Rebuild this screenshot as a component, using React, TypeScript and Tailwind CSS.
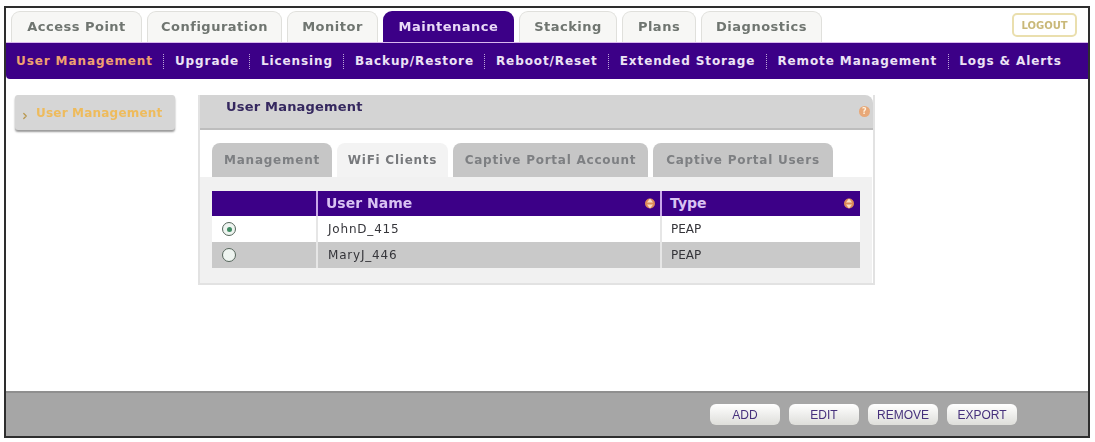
import { ChevronRight } from 'lucide-react'

const topTabs = [
  { label: 'Access Point', width: 'w-[131px]' },
  { label: 'Configuration', width: 'w-[135px]' },
  { label: 'Monitor', width: 'w-[91px]' },
  { label: 'Maintenance', width: 'w-[131px]', active: true },
  { label: 'Stacking', width: 'w-[98px]' },
  { label: 'Plans', width: 'w-[74px]' },
  { label: 'Diagnostics', width: 'w-[121px]' },
]

const subNav = [
  { label: 'User Management', active: true },
  { label: 'Upgrade' },
  { label: 'Licensing' },
  { label: 'Backup/Restore' },
  { label: 'Reboot/Reset' },
  { label: 'Extended Storage' },
  { label: 'Remote Management' },
  { label: 'Logs & Alerts' },
]

const innerTabs = [
  { label: 'Management', width: 'w-[120px]' },
  { label: 'WiFi Clients', width: 'w-[111px]', active: true },
  { label: 'Captive Portal Account', width: 'w-[195px]' },
  { label: 'Captive Portal Users', width: 'w-[180px]' },
]

const rows = [
  { name: 'JohnD_415', type: 'PEAP', selected: true },
  { name: 'MaryJ_446', type: 'PEAP', selected: false },
]

function SortIcon() {
  return (
    <svg width="10" height="13" viewBox="0 0 10 13">
      <circle cx="5" cy="6.5" r="5" fill="#dc8a58" />
      <path d="M5 1.5 8 5.5H2Z M5 11.5 8 7.5H2Z" fill="#f8dcc0" />
    </svg>
  )
}

function Radio({ selected }: { selected: boolean }) {
  return (
    <span className="w-[14px] h-[14px] rounded-full border border-[#55655b] bg-[#eef4f0] flex items-center justify-center">
      {selected && <span className="w-[5px] h-[5px] rounded-full bg-[#3f8a62]" />}
    </span>
  )
}

export default function App() {
  return (
    <div className="h-[442px] w-[1095px] bg-white pt-[6px] pl-[4px] overflow-hidden font-['DejaVu_Sans',sans-serif]">
      <div className="w-[1086px] h-[432px] border-2 border-[#2e2e2e] flex flex-col blur-[0.6px]">
        {/* top tabs */}
        <div className="h-[34px] shrink-0 flex items-end pl-[5px] relative">
          <div className="flex gap-[5px]">
            {topTabs.map(tab => (
              <div
                key={tab.label}
                className={`${tab.width} h-[31px] rounded-t-[9px] flex items-center justify-center text-[13px] font-bold tracking-[0.5px] ${
                  tab.active
                    ? 'bg-[#3c0087] text-[#e9d9f7]'
                    : 'bg-[#f7f7f5] border border-b-0 border-[#e0e0dc] text-[#6f7570]'
                }`}
              >
                {tab.label}
              </div>
            ))}
          </div>
          <div className="absolute left-[1006px] top-[5px] w-[65px] h-[24px] rounded-[5px] border-2 border-[#eadfae] flex items-center justify-center text-[10px] font-bold text-[#c9b878]">
            LOGOUT
          </div>
        </div>

        {/* sub navigation */}
        <div className="h-[37px] shrink-0 bg-[#3c0087] border-t border-[#d9b8ee] flex items-center pl-[10px] rounded-bl-[4px] text-[12px] font-bold tracking-[0.9px] text-[#ece2f5] whitespace-nowrap">
          {subNav.map((item, i) => (
            <div key={item.label} className="flex items-center">
              {i > 0 && <span className="mx-[10.5px] h-[15px] border-l border-dotted border-[#bda6d8]" />}
              <span className={item.active ? 'text-[#f0a070]' : ''}>{item.label}</span>
            </div>
          ))}
        </div>

        {/* content */}
        <div className="flex-1 flex items-start pt-[16px] pl-[9px] gap-[23px]">
          <div className="w-[160px] h-[35px] bg-[#d6d6d6] rounded-[3px] shadow-[0_2px_2px_#9a9a9a] flex items-center pl-[5px] text-[12px] font-bold tracking-[0.2px] text-[#eebb5c]">
            <ChevronRight className="w-[10px] h-[10px] mt-[6px] mr-[6px] shrink-0 text-[#b89850]" strokeWidth={3} />
            <span className="whitespace-nowrap">User Management</span>
          </div>

          <div className="w-[677px] h-[190px] flex flex-col border-x-2 border-b-2 border-[#e2e2e2]">
            <div className="h-[35px] shrink-0 bg-[#d4d4d4] rounded-tr-[8px] border-b-2 border-[#bdbdbd] flex items-center justify-between pl-[26px] pr-[3px] text-[13px] font-bold tracking-[0.2px] text-[#35285f]">
              <span className="-mt-[10px]">User Management</span>
              <span className="w-[11px] h-[11px] rounded-full bg-[#e8a878] text-[#fff3e0] text-[8px] flex items-center justify-center">?</span>
            </div>

            <div className="flex gap-[5px] pl-[12px] pt-[13px] shrink-0">
              {innerTabs.map(tab => (
                <div
                  key={tab.label}
                  className={`${tab.width} h-[34px] rounded-t-[8px] flex items-center justify-center text-[12px] font-bold tracking-[0.75px] ${
                    tab.active ? 'bg-[#f3f3f3] text-[#77797c]' : 'bg-[#c6c6c6] text-[#7d7f82]'
                  }`}
                >
                  {tab.label}
                </div>
              ))}
            </div>

            <div className="flex-1 bg-[#f1f1f1] pt-[14px] px-[12px] mr-[1px]">
              <div className="grid grid-cols-[106px_344px_198px] text-[12px] tracking-[0.8px]">
                <div className="h-[25px] bg-[#3c0087] border-r-2 border-[#c9a8e8]" />
                <div className="h-[25px] bg-[#3c0087] border-r-2 border-[#c9a8e8] flex items-center justify-between pl-[8px] pr-[5px] text-[14px] font-bold tracking-normal text-[#d9c2f2]">
                  <span>User Name</span>
                  <SortIcon />
                </div>
                <div className="h-[25px] bg-[#3c0087] flex items-center justify-between pl-[8px] pr-[6px] text-[14px] font-bold tracking-normal text-[#d9c2f2]">
                  <span>Type</span>
                  <SortIcon />
                </div>
                {rows.map((row, i) => {
                  const bg = i % 2 === 0 ? 'bg-white' : 'bg-[#c9c9c9]'
                  return [
                    <div key={row.name + 'r'} className={`h-[26px] ${bg} border-r-2 border-[#e6e6e6] flex items-center pl-[10px]`}>
                      <Radio selected={row.selected} />
                    </div>,
                    <div key={row.name + 'n'} className={`h-[26px] ${bg} border-r-2 border-[#e6e6e6] flex items-center pl-[10px] text-[#35353a]`}>
                      {row.name}
                    </div>,
                    <div key={row.name + 't'} className={`h-[26px] ${bg} flex items-center pl-[9px] text-[#35353a] tracking-normal`}>
                      {row.type}
                    </div>,
                  ]
                })}
              </div>
            </div>
          </div>
        </div>

        {/* action bar */}
        <div className="h-[45px] shrink-0 bg-[#a6a6a6] border-t-2 border-[#8f8f8f] flex items-center pl-[704px] gap-[9px] font-['Liberation_Sans',sans-serif] text-[12px] text-[#46307c]">
          {['ADD', 'EDIT', 'REMOVE', 'EXPORT'].map(label => (
            <div key={label} className="w-[70px] h-[21px] rounded-[6px] bg-gradient-to-b from-white to-[#dededa] flex items-center justify-center">
              {label}
            </div>
          ))}
        </div>
      </div>
    </div>
  )
}
